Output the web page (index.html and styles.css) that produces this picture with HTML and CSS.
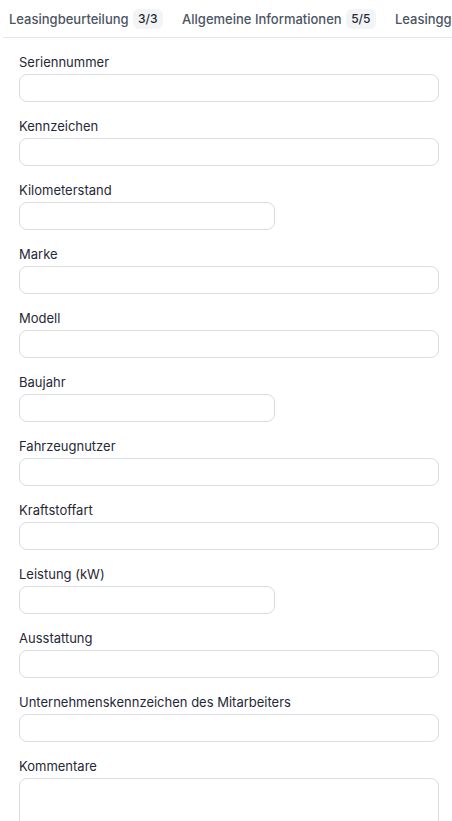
FILE: index.html
```html
<!DOCTYPE html>
<html lang="de">
<head>
<meta charset="utf-8">
<title>Leasing</title>
<link rel="stylesheet" href="styles.css">
</head>
<body>
<nav class="tabs">
  <div class="tab"><span class="tab-label">Leasingbeurteilung</span><span class="badge">3/3</span></div>
  <div class="tab"><span class="tab-label">Allgemeine Informationen</span><span class="badge">5/5</span></div>
  <div class="tab"><span class="tab-label">Leasinggegenstand</span><span class="badge">0/11</span></div>
</nav>
<form class="form">
  <div class="field"><label class="label">Seriennummer</label><input class="input" type="text"></div>
  <div class="field"><label class="label">Kennzeichen</label><input class="input" type="text"></div>
  <div class="field"><label class="label">Kilometerstand</label><input class="input narrow" type="text"></div>
  <div class="field"><label class="label">Marke</label><input class="input" type="text"></div>
  <div class="field"><label class="label">Modell</label><input class="input" type="text"></div>
  <div class="field"><label class="label">Baujahr</label><input class="input narrow" type="text"></div>
  <div class="field"><label class="label">Fahrzeugnutzer</label><input class="input" type="text"></div>
  <div class="field"><label class="label">Kraftstoffart</label><input class="input" type="text"></div>
  <div class="field"><label class="label">Leistung (kW)</label><input class="input narrow" type="text"></div>
  <div class="field"><label class="label">Ausstattung</label><input class="input" type="text"></div>
  <div class="field"><label class="label">Unternehmenskennzeichen des Mitarbeiters</label><input class="input" type="text"></div>
  <div class="field"><label class="label">Kommentare</label><textarea class="input textarea"></textarea></div>
</form>
</body>
</html>
```
FILE: styles.css
```css
html, body {
  margin: 0;
  padding: 0;
  background: #ffffff;
  font-family: Inter, "Noto Sans", sans-serif;
  font-size: 13px;
  overflow: hidden;
}

.tabs {
  height: 37px;
  margin-left: 3px;
  padding-left: 6px;
  border-bottom: 1px solid #e5e7eb;
  display: flex;
  align-items: center;
  gap: 19px;
  white-space: nowrap;
  overflow: hidden;
}

.tab {
  display: flex;
  align-items: center;
  gap: 4px;
  flex-shrink: 0;
}

.tab-label {
  color: #4b5563;
  font-weight: 500;
  line-height: 20px;
}

.badge {
  background: #f3f4f6;
  color: #1f2937;
  border-radius: 6px;
  height: 20px;
  line-height: 20px;
  padding: 0 5.5px;
  font-size: 12px;
  font-weight: 500;
}

.form {
  padding: 16px 13px 0 19px;
  display: flex;
  flex-direction: column;
  gap: 16px;
}

.field {
  display: flex;
  flex-direction: column;
  gap: 4px;
}

.label {
  color: #1f2937;
  line-height: 16px;
  height: 16px;
}

.input {
  box-sizing: border-box;
  height: 28px;
  width: 100%;
  margin: 0;
  border: 1px solid #d9dce1;
  border-radius: 8px;
  background: #ffffff;
  font: inherit;
  padding: 0 10px;
  outline: none;
}

.narrow {
  max-width: 256px;
}

.textarea {
  height: 80px;
  resize: none;
  padding: 6px 10px;
}
```
